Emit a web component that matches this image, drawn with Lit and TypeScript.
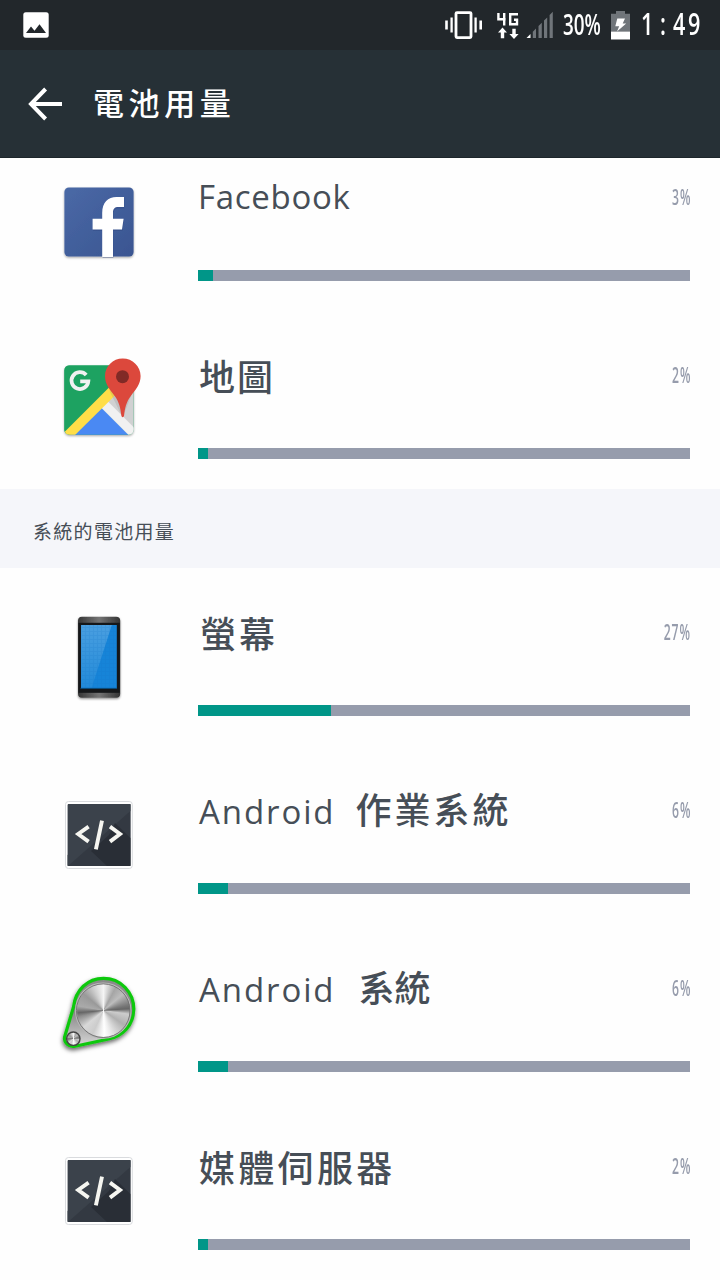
import { LitElement, html, css, TemplateResult } from "lit";
import { customElement, property } from "lit/decorators.js";

interface Run { text: string; cjk?: boolean; spacing: number; before?: number; }
interface Usage { icon: string; runs: Run[]; percent: number; }

const apps: Usage[] = [
  { icon: "facebook", runs: [{ text: "Facebook", spacing: 0.7 }], percent: 3 },
  { icon: "maps", runs: [{ text: "地圖", cjk: true, spacing: 2, before: 1 }], percent: 2 },
];

const system: Usage[] = [
  { icon: "phone", runs: [{ text: "螢幕", cjk: true, spacing: 3, before: 2 }], percent: 27 },
  {
    icon: "code",
    runs: [{ text: "Android", spacing: 1.9, before: 1 }, { text: "作業系統", cjk: true, spacing: 3, before: 20 }],
    percent: 6,
  },
  {
    icon: "dial",
    runs: [{ text: "Android", spacing: 1.9, before: 1 }, { text: "系統", cjk: true, spacing: 0, before: 23 }],
    percent: 6,
  },
  { icon: "code", runs: [{ text: "媒體伺服器", cjk: true, spacing: 3.3, before: 1 }], percent: 2 },
];

const facebookIcon = html`<svg width="100" height="100" viewBox="0 0 100 100">
  <defs>
    <linearGradient id="fb" x1="0" y1="0" x2="1" y2="1">
      <stop offset="0" stop-color="#4a69a6" /><stop offset="1" stop-color="#3a5591" />
    </linearGradient>
    <filter id="sh" x="-20%" y="-20%" width="140%" height="140%">
      <feDropShadow dx="0" dy="1.2" stdDeviation="1" flood-opacity="0.35" />
    </filter>
  </defs>
  <rect x="15.4" y="15.4" width="69.2" height="69.2" rx="4.5" fill="url(#fb)" filter="url(#sh)" />
  <path d="M53.2 84.6V57.6H43.6V46.8H53.2V41C53.2 30.5 59 25 67.5 25H75V35H69.5C65.5 35 64 37 64 40.5V46.8H74.6L73 57.6H64V84.6Z" fill="#2c437a" opacity=".35" transform="translate(.4 1.4)" />
  <path d="M53.2 85V57.6H43.6V46.8H53.2V41C53.2 30.5 59 25 67.5 25H75V35H69.5C65.5 35 64 37 64 40.5V46.8H74.6L73 57.6H64V85Z" fill="#fff" />
</svg>`;

const mapsIcon = html`<svg width="100" height="100" viewBox="0 0 100 100">
  <defs>
    <clipPath id="tile"><rect x="15.4" y="15.4" width="69.2" height="69.4" rx="5" /></clipPath>
    <filter id="sh" x="-20%" y="-20%" width="140%" height="140%">
      <feDropShadow dx="0" dy="1.2" stdDeviation="1" flood-opacity="0.35" />
    </filter>
  </defs>
  <rect x="15.4" y="15.4" width="69.2" height="69.4" rx="5" fill="#1da261" filter="url(#sh)" />
  <g clip-path="url(#tile)">
    <path d="M15 15H86L15 86Z" fill="#1da261" />
    <path d="M86 15V86L50 50Z" fill="#d0d1d2" />
    <path d="M50.7 55.5L82 87H19Z" fill="#4a89f3" />
    <path d="M50.5 56L57 49.5L88 80.5L81.5 87Z" fill="#f1f1f1" />
    <path d="M13 84.5L69 28.5V42.5L22.5 88.5Z" fill="#ffde48" />
    <path d="M61 42L73.7 67.5L82 46V36H60Z" fill="#777" opacity=".18" />
  </g>
  <path d="M37.2 25A8.4 8.4 0 1 0 39.3 31.4H31.2" fill="none" stroke="#f1f1f1" stroke-width="3.8" />
  <path d="M73.7 8.4C63.8 8.4 56 16.2 56 26C56 34.5 60.8 39.5 65.7 46C70.2 52 71.5 58.5 72.3 65.3C72.6 67.9 74.8 67.9 75.1 65.3C75.9 58.5 77.2 52 81.8 46C86.7 39.5 91.6 34.5 91.6 26C91.6 16.2 83.6 8.4 73.7 8.4Z" fill="#dc483c" />
  <circle cx="73.5" cy="26.7" r="6.5" fill="#812a26" />
</svg>`;

const phoneIcon = html`<svg width="100" height="100" viewBox="0 0 100 100">
  <defs>
    <linearGradient id="body" x1="0" x2="1">
      <stop offset="0" stop-color="#363636" /><stop offset=".5" stop-color="#747474" /><stop offset="1" stop-color="#333" />
    </linearGradient>
    <linearGradient id="glass" x1="0" x2="0" y1="0" y2="1">
      <stop offset="0" stop-color="#4a9fe0" /><stop offset="1" stop-color="#218ad9" />
    </linearGradient>
    <pattern id="grid" width="4" height="4" patternUnits="userSpaceOnUse">
      <path d="M0 .5H4M.5 0V4" stroke="#0f6fc2" stroke-width=".8" opacity=".18" />
    </pattern>
    <filter id="sh" x="-20%" y="-20%" width="140%" height="140%">
      <feDropShadow dx="0" dy="1.2" stdDeviation="1" flood-opacity="0.45" />
    </filter>
  </defs>
  <rect x="29" y="9.8" width="42.2" height="81" rx="4" fill="url(#body)" filter="url(#sh)" />
  <rect x="29.4" y="15.8" width="41.4" height="70" fill="#151719" />
  <rect x="32" y="18" width="35.8" height="63" fill="#1684d8" />
  <path d="M32 18H62.8L42.6 81H32Z" fill="url(#glass)" />
  <rect x="32" y="18" width="35.8" height="63" fill="url(#grid)" />
  <path d="M31.5 81.3H68" stroke="#0868ae" stroke-width=".8" />
</svg>`;

const codeIcon = html`<svg width="100" height="100" viewBox="0 0 100 100">
  <rect x="16.5" y="16.5" width="66.8" height="67" rx="3" fill="#fff" stroke="#d9dbde" />
  <rect x="18.6" y="19" width="62.8" height="62" rx="1" fill="#353c45" />
  <path d="M18.6 81V70L69 30L81.4 19V81Z" fill="#333942" />
  <path d="M19 19H81.4V26L53 51L19 81Z" fill="#3b424b" />
  <path d="M66 38L81.4 53V81H58L42 66L60 50Z" fill="#292e36" />
  <path d="M39.6 41.6L29.2 49L39.6 56.6M61 41.6L71 49L61 56.6M53 35.6L46.9 64.4" fill="none" stroke="#f6f6f1" stroke-width="3.9" />
</svg>`;

const dialIcon = html`<svg width="100" height="100" viewBox="0 0 100 100">
  <defs>
    <linearGradient id="rim" x1="0" y1="0" x2="0" y2="1">
      <stop offset="0" stop-color="#8b8b8b" /><stop offset=".5" stop-color="#888" /><stop offset="1" stop-color="#d8d8d8" />
    </linearGradient>
    <filter id="soft" x="-20%" y="-20%" width="140%" height="140%">
      <feDropShadow dx="-.5" dy="2.4" stdDeviation="2" flood-opacity="0.6" />
    </filter>
  </defs>
  <path d="M24.5 44C26.5 27 38.5 15.3 54.5 15.3C71.5 15.3 84.8 29 84.8 46C84.8 62 73.5 73.5 58.5 76.3L26 83.2C19.5 84.3 14.6 79.5 15.6 74Z" fill="url(#rim)" stroke="#10c80e" stroke-width="3.2" stroke-linejoin="round" filter="url(#soft)" />
  <circle cx="54.2" cy="47.6" r="28.2" fill="#bababa" />
  <foreignObject x="27.5" y="21" width="53.4" height="53.4">
    <div class="metal"></div>
  </foreignObject>
  <circle cx="54.2" cy="47.7" r="26.8" fill="none" stroke="#666" stroke-width=".8" />
  <foreignObject x="17.6" y="69" width="13.4" height="13.4">
    <div class="metal small"></div>
  </foreignObject>
  <circle cx="24.3" cy="75.7" r="6.7" fill="none" stroke="#444" stroke-width="1.4" />
</svg>`;

const icons: Record<string, TemplateResult> = {
  facebook: facebookIcon,
  maps: mapsIcon,
  phone: phoneIcon,
  code: codeIcon,
  dial: dialIcon,
};

@customElement("usage-row")
class UsageRow extends LitElement {
  @property({ attribute: false }) item!: Usage;

  static styles = css`
    :host {
      display: grid;
      box-sizing: border-box;
      height: 178px;
      padding-left: 49px;
      grid-template-columns: 100px 492px;
      column-gap: 49px;
      align-items: center;
      flex: none;
    }
    svg { display: block; }
    .metal {
      width: 53.4px;
      height: 53.4px;
      border-radius: 50%;
      background: conic-gradient(#f5f5f5 0deg, #a5a5a5 28deg, #bdbdbd 50deg, #777 78deg, #666 86deg, #ccc 98deg, #b0b0b0 125deg, #eee 165deg, #fff 178deg, #ccc 205deg, #d8d8d8 230deg, #8e8e8e 256deg, #666 265deg, #aaa 280deg, #999 310deg, #ccc 335deg, #f5f5f5 360deg);
    }
    .small { width: 13.4px; height: 13.4px; }
    .detail {
      display: flex;
      flex-direction: column;
      justify-content: space-between;
      box-sizing: border-box;
      height: 178px;
      padding: 39px 0 30px;
    }
    .head {
      display: flex;
      align-items: center;
      justify-content: space-between;
      height: 50px;
    }
    .name {
      display: flex;
      align-items: baseline;
      color: #464e57;
      font-family: "Open Sans", "Noto Sans CJK TC", sans-serif;
      font-size: 33px;
      line-height: 50px;
      white-space: nowrap;
    }
    .cjk {
      font-family: "Noto Sans CJK TC", sans-serif;
      font-size: 36px;
      font-weight: 500;
    }
    .percent {
      color: #969cac;
      font-family: "Open Sans", sans-serif;
      font-size: 21px;
      font-weight: 600;
      letter-spacing: 1.6px;
      margin-right: -1px;
      transform: scaleX(0.58);
      transform-origin: right center;
    }
    .track { height: 11px; background: #969cac; }
    .fill { height: 11px; background: #009688; }
  `;

  render() {
    const { icon, runs, percent } = this.item;
    return html`
      ${icons[icon]}
      <div class="detail">
        <div class="head">
          <div class="name">
            ${runs.map(
              (r) => html`<span class=${r.cjk ? "cjk" : "latin"} style="letter-spacing:${r.spacing}px;margin-left:${r.before ?? 0}px">${r.text}</span>`
            )}
          </div>
          <div class="percent">${percent}%</div>
        </div>
        <div class="track"><div class="fill" style="width:${percent}%"></div></div>
      </div>
    `;
  }
}

@customElement("app-root")
class AppRoot extends LitElement {
  static styles = css`
    :host {
      display: flex;
      flex-direction: column;
      width: 720px;
      height: 1280px;
      overflow: hidden;
      background: #fefefe;
      font-family: "Open Sans", "Noto Sans CJK TC", sans-serif;
    }
    svg { display: block; flex: none; }
    .status {
      display: flex;
      align-items: center;
      flex: none;
      box-sizing: border-box;
      height: 50px;
      padding: 0 17px 0 23px;
      background: #22272b;
      color: #fff;
    }
    .tray { display: flex; align-items: center; margin-left: auto; }
    .charge {
      width: 40px;
      margin-left: 10px;
      font-size: 29px;
      font-weight: 600;
      line-height: 48px;
      height: 50px;
    }
    .charge span { display: inline-block; transform: scaleX(0.65); transform-origin: left center; }
    .battery { margin-left: 8px; }
    .clock {
      display: grid;
      grid-template-columns: 19px 13px 15px 15px;
      width: 62px;
      margin-left: 11px;
      font-size: 30px;
      font-weight: 600;
      line-height: 48px;
      height: 50px;
    }
    .clock span { display: inline-block; transform: scaleX(0.72); transform-origin: left center; }
    .bar {
      display: flex;
      align-items: center;
      flex: none;
      box-sizing: border-box;
      height: 108px;
      padding-left: 28px;
      gap: 30px;
      background: #263036;
      border-bottom: 1px solid #1d262b;
      color: #fff;
    }
    .title {
      font-family: "Noto Sans CJK TC", sans-serif;
      font-size: 31px;
      font-weight: 500;
      letter-spacing: 4.6px;
      line-height: 50px;
      padding-bottom: 4px;
    }
    .list {
      display: flex;
      flex-direction: column;
      justify-content: flex-end;
      flex: none;
      height: 331px;
      overflow: hidden;
    }
    .section {
      display: flex;
      align-items: center;
      flex: none;
      box-sizing: border-box;
      height: 79px;
      padding: 3px 0 0 33px;
      background: #f5f6fa;
      color: #464e57;
      font-family: "Noto Sans CJK TC", sans-serif;
      font-size: 19px;
      letter-spacing: 1.3px;
    }
  `;

  render() {
    return html`
      <div class="status">
        <svg width="26" height="26" viewBox="0 0 26 26">
          <rect x=".3" y=".2" width="25.4" height="25.6" rx="2.5" fill="#fff" />
          <path d="M3 21L8 14.5L11.5 18.7L16.5 12.2L23 21Z" fill="#22272b" />
        </svg>
        <div class="tray">
          <svg width="108" height="32" viewBox="0 0 108 32">
            <g fill="none" stroke="#fff">
              <rect x="11" y="3.6" width="15" height="25" rx="1" stroke-width="2.8" />
              <path d="M6.6 8.5V23.5M30.6 8.5V23.5" stroke-width="2.3" />
              <path d="M1.5 11.5V20.5M35.7 11.5V20.5" stroke-width="2.6" />
              <path d="M53.4 4V10.3H60.6M59.2 4V16.5M73 5.3H65.2V15.3H72V10.8H69" stroke-width="2.4" />
            </g>
            <path d="M57.5 18.5L62 23.5H59.2V29.2H55.8V23.5H53ZM69 30L64.4 25H67.3V19.8H70.7V25H73.6Z" fill="#fff" />
            <path d="M81.5 29L85.5 25V29Z" fill="#fff" />
            <path d="M87.8 22.8L91 19.6V29H87.8ZM93.5 17L96.8 13.8V29H93.5ZM99 11.6L102.2 8.4V29H99ZM104.6 6L107.8 2.8V29H104.6Z" fill="#70757a" />
          </svg>
          <div class="charge"><span>30%</span></div>
          <svg class="battery" width="19" height="30" viewBox="0 0 19 30">
            <path d="M5 1H14V3.8H19V21.5H0V3.8H5Z" fill="#70757a" />
            <path d="M0 21.5H19V29.5H0Z" fill="#fff" />
            <path d="M6.3 8.5H14L11.7 13.5H15.2L6 21.5L8.2 16.3H4.3Z" fill="#fff" />
          </svg>
          <div class="clock"><span>1</span><span>:</span><span>4</span><span>9</span></div>
        </div>
      </div>
      <div class="bar">
        <svg width="35" height="34" viewBox="0 0 35 34">
          <path d="M34 17H3M17.6 2L3 17L17.6 32" fill="none" stroke="#fff" stroke-width="4" />
        </svg>
        <div class="title">電池用量</div>
      </div>
      <div class="list">${apps.map((a) => html`<usage-row .item=${a}></usage-row>`)}</div>
      <div class="section">系統的電池用量</div>
      ${system.map((a) => html`<usage-row .item=${a}></usage-row>`)}
    `;
  }
}
